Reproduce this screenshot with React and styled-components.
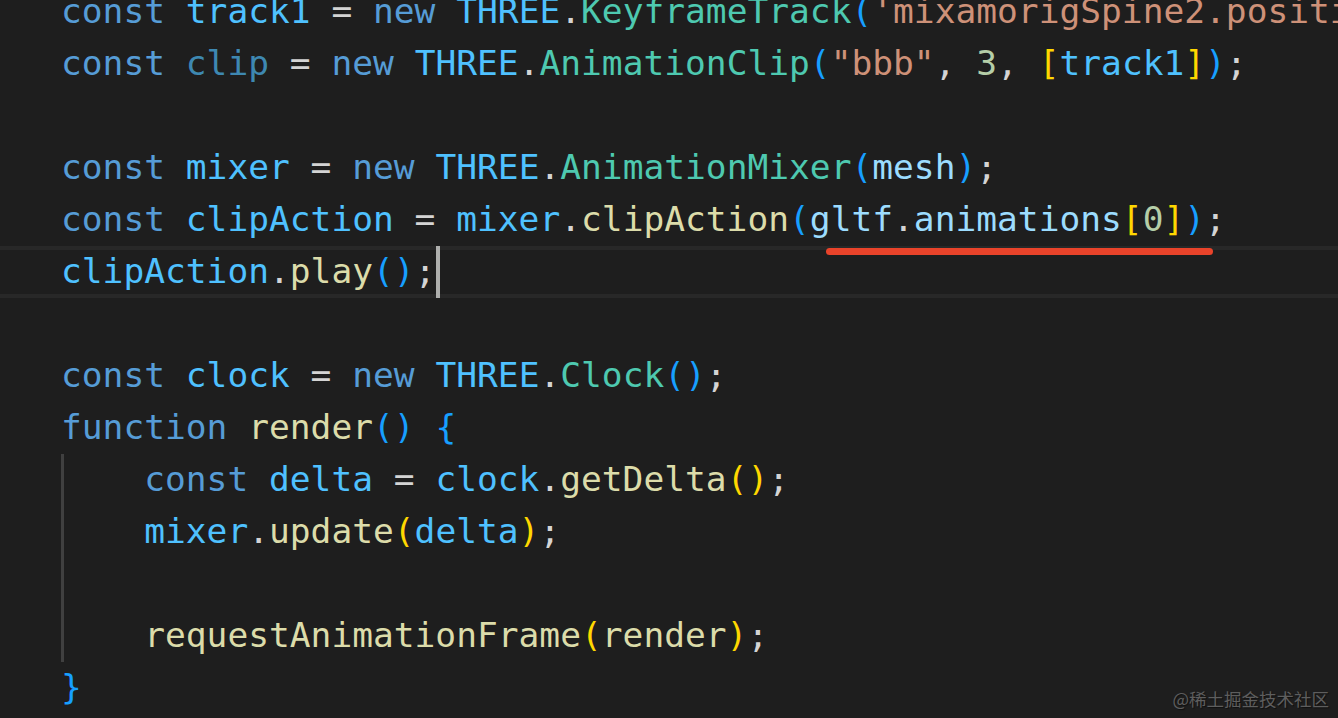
import React from "react";
import styled, { createGlobalStyle, css } from "styled-components";

const GlobalStyle = createGlobalStyle`
  html, body { margin: 0; padding: 0; background: #1e1e1e; overflow: hidden; }
`;

const COLORS = {
  kw: "#569cd6",
  cv: "#4fc1ff",
  dim: "rgba(79, 193, 255, 0.68)",
  v: "#9cdcfe",
  cls: "#4ec9b0",
  fn: "#dcdcaa",
  str: "#ce9178",
  num: "#b5cea8",
  p: "#d4d4d4",
  b1: "#179fff",
  b2: "#ffd700",
};

const Editor = styled.div`
  position: relative;
  width: 1338px;
  height: 718px;
  overflow: hidden;
  background: #1e1e1e;
  font-family: "DejaVu Sans Mono", "Liberation Mono", monospace;
  font-size: 34.55px;
`;

const Lines = styled.div`
  display: flex;
  flex-direction: column;
  margin-top: -14px;
`;

const Line = styled.div`
  box-sizing: border-box;
  height: 52px;
  line-height: 50px;
  padding-bottom: 2px;
  white-space: pre;
  padding-left: ${(p) => (p.$nested ? "calc(4ch - 3px)" : "61px")};
  ${(p) =>
    p.$current &&
    css`
      border-top: 4px solid #282828;
      border-bottom: 4px solid #282828;
      line-height: 42px;
    `}
`;

const Guide = styled.div`
  margin-left: 61px;
  border-left: 3px solid #404040;
  display: flex;
  flex-direction: column;
`;

const Tok = styled.span`
  color: ${(p) => COLORS[p.$k]};
`;

const Mark = styled.span`
  position: relative;
  display: inline-block;
  height: 50px;
  &::after {
    content: "";
    position: absolute;
    left: 16px;
    right: -8px;
    top: calc(100% + 4px);
    height: 7px;
    border-radius: 4px;
    background: #e9432a;
  }
`;

const Cursor = styled.span`
  display: inline-block;
  vertical-align: top;
  width: 4px;
  height: 52px;
  margin: -4px 0 -6px 1px;
  background: #aeafad;
`;

const Watermark = styled.div`
  position: absolute;
  right: 9px;
  bottom: 9px;
  font-family: "Noto Sans CJK SC", "Noto Sans", sans-serif;
  font-size: 17.5px;
  line-height: 20px;
  color: #5e5e5e;
  text-shadow: 1px 1px 1px rgba(0, 0, 0, 0.5);
`;

const Tokens = ({ items }) =>
  items.map((t, i) => (
    <Tok key={i} $k={t[0]}>
      {t[1]}
    </Tok>
  ));

const line0 = [
  ["kw", "const"], ["p", " "], ["cv", "track1"], ["p", " = "], ["kw", "new"], ["p", " "],
  ["cv", "THREE"], ["p", "."], ["cls", "KeyframeTrack"], ["b1", "("],
  ["str", "'mixamorigSpine2.position'"], ["p", ", "], ["b2", "["], ["num", "0"], ["p", ", "],
  ["num", "1"], ["p", ", "], ["num", "2"], ["b2", "]"], ["b1", ")"], ["p", ";"],
];
const line1 = [
  ["kw", "const"], ["p", " "], ["dim", "clip"], ["p", " = "], ["kw", "new"], ["p", " "],
  ["cv", "THREE"], ["p", "."], ["cls", "AnimationClip"], ["b1", "("], ["str", '"bbb"'],
  ["p", ", "], ["num", "3"], ["p", ", "], ["b2", "["], ["cv", "track1"], ["b2", "]"],
  ["b1", ")"], ["p", ";"],
];
const line3 = [
  ["kw", "const"], ["p", " "], ["cv", "mixer"], ["p", " = "], ["kw", "new"], ["p", " "],
  ["cv", "THREE"], ["p", "."], ["cls", "AnimationMixer"], ["b1", "("], ["v", "mesh"],
  ["b1", ")"], ["p", ";"],
];
const line4a = [
  ["kw", "const"], ["p", " "], ["cv", "clipAction"], ["p", " = "], ["cv", "mixer"], ["p", "."],
  ["fn", "clipAction"], ["b1", "("],
];
const line4b = [
  ["v", "gltf"], ["p", "."], ["v", "animations"], ["b2", "["], ["num", "0"], ["b2", "]"],
  ["b1", ")"],
];
const line5 = [["cv", "clipAction"], ["p", "."], ["fn", "play"], ["b1", "()"], ["p", ";"]];
const line7 = [
  ["kw", "const"], ["p", " "], ["cv", "clock"], ["p", " = "], ["kw", "new"], ["p", " "],
  ["cv", "THREE"], ["p", "."], ["cls", "Clock"], ["b1", "()"], ["p", ";"],
];
const line8 = [["kw", "function"], ["p", " "], ["fn", "render"], ["b1", "()"], ["p", " "], ["b1", "{"]];
const line9 = [
  ["kw", "const"], ["p", " "], ["cv", "delta"], ["p", " = "], ["cv", "clock"], ["p", "."],
  ["fn", "getDelta"], ["b2", "()"], ["p", ";"],
];
const line10 = [
  ["cv", "mixer"], ["p", "."], ["fn", "update"], ["b2", "("], ["cv", "delta"], ["b2", ")"], ["p", ";"],
];
const line12 = [
  ["fn", "requestAnimationFrame"], ["b2", "("], ["fn", "render"], ["b2", ")"], ["p", ";"],
];
const line13 = [["b1", "}"]];

export default function App() {
  return (
    <>
      <GlobalStyle />
      <Editor>
        <Lines>
          <Line><Tokens items={line0} /></Line>
          <Line><Tokens items={line1} /></Line>
          <Line />
          <Line><Tokens items={line3} /></Line>
          <Line>
            <Tokens items={line4a} />
            <Mark><Tokens items={line4b} /></Mark>
            <Tok $k="p">;</Tok>
          </Line>
          <Line $current>
            <Tokens items={line5} />
            <Cursor />
          </Line>
          <Line />
          <Line><Tokens items={line7} /></Line>
          <Line><Tokens items={line8} /></Line>
          <Guide>
            <Line $nested><Tokens items={line9} /></Line>
            <Line $nested><Tokens items={line10} /></Line>
            <Line $nested />
            <Line $nested><Tokens items={line12} /></Line>
          </Guide>
          <Line><Tokens items={line13} /></Line>
        </Lines>
        <Watermark>@稀土掘金技术社区</Watermark>
      </Editor>
    </>
  );
}
